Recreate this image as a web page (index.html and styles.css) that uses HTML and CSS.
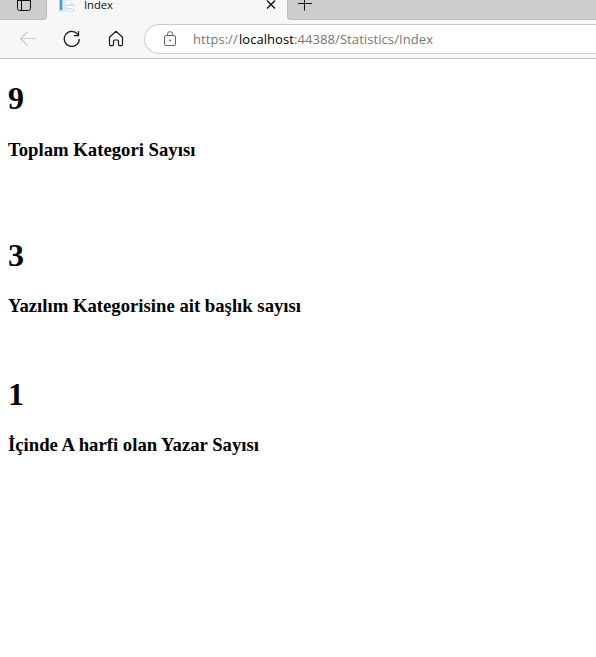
FILE: index.html
```html
<!DOCTYPE html>
<html lang="tr">
<head>
<meta charset="utf-8">
<title>Index</title>
<link rel="stylesheet" href="styles.css">
</head>
<body>
<header class="browser">
  <div class="tabs">
    <div class="tab-menu">
      <svg width="16" height="20" viewBox="0 0 16 20" fill="none" stroke="#111"><path d="M1.500-2V8.500Q1.500 10.500 3.500 10.500H12.500Q14.500 10.500 14.500 8.500V-2M5.500 1V10.500M1.500.500H14.500"/></svg>
    </div>
    <div class="tab">
      <svg class="favicon" width="16" height="12" viewBox="0 0 16 12"><path fill="#e4e8f0" d="M0 0h11l4 4v8H0z"/><path fill="#4b9bd1" d="M1 0h2v10H1z"/><path fill="#a9d4ed" d="M0 0h1v11H0zM3 0h1v10H3z"/><path fill="#fff" d="M7 1h4v3H7zM8 6h6v4H8z"/><path stroke="#d3d7e4" fill="none" d="M6.500 5.500h8v6M8 8.500h5"/></svg>
      <span class="tab-title">Index</span>
      <svg class="close" width="10" height="10" viewBox="0 0 10 10" stroke="#111" stroke-width="1.400"><path d="M1 .500l8 8M9 .500L1 8.500"/></svg>
    </div>
    <div class="tab-rest">
      <svg width="14" height="12" viewBox="0 0 14 12" stroke="#111"><path d="M0 3.500h14M6.500 0v10.500"/></svg>
    </div>
  </div>
  <div class="toolbar">
    <svg class="back" width="16" height="16" viewBox="0 0 16 16" fill="none" stroke="#cacaca" stroke-width="1.100"><path d="M16 8.500H.800M7.500 1.500l-7 7 7 7"/></svg>
    <svg class="reload" width="18" height="18" viewBox="0 0 18 18" fill="none" stroke="#1b1b1b" stroke-width="1.250"><path d="M16.300 9A7.500 7.500 0 1 1 14.600 4.200L15.500 5.500M15.500 1v4.500H11"/></svg>
    <svg class="home" width="16" height="17" viewBox="0 0 16 17" fill="none" stroke="#1b1b1b" stroke-width="1.200" stroke-linejoin="round"><path d="M1.500 7.200L8 1.300l6.500 5.900v7.400q0 1-1 1h-2q-1 0-1-1V11q0-1-1-1h-3q-1 0-1 1v3.600q0 1-1 1h-2q-1 0-1-1z"/></svg>
    <div class="address">
      <svg class="lock" width="13" height="16" viewBox="0 0 13 16" fill="none" stroke="#666"><rect x=".5" y="4.500" width="11" height="10" rx="1.500"/><path d="M3.500 4.500V3.200a2.600 2.600 0 0 1 5.200 0v1.300"/><circle cx="6" cy="9.500" r=".9" fill="#666" stroke="none"/></svg>
      <span class="url"><span class="scheme">https://</span><span class="host">localhost</span><span class="path">:44388/Statistics/Index</span></span>
    </div>
  </div>
</header>
<main>
  <section class="stat stat-first">
    <h1>9</h1>
    <h3>Toplam Kategori Sayısı</h3>
  </section>
  <section class="stat stat-spaced">
    <h1>3</h1>
    <h3>Yazılım Kategorisine ait başlık sayısı</h3>
  </section>
  <section class="stat">
    <h1>1</h1>
    <h3>İçinde A harfi olan Yazar Sayısı</h3>
  </section>
</main>
</body>
</html>
```
FILE: styles.css
```css
* { box-sizing: border-box; }
body {
  margin: 0;
  height: 657px;
  overflow: hidden;
  background: #fff;
  color: #000;
  font-family: "Liberation Serif", serif;
}
svg { display: block; flex: none; }
.browser {
  height: 59px;
  background: #f7f7f7;
  border-bottom: 1px solid #c2c2c2;
  font-family: "Open Sans", "Noto Sans", sans-serif;
}
.tabs { display: flex; height: 20px; }
.tab-menu {
  width: 47px;
  padding-left: 16px;
  background: #cdcdcd;
  border: solid #bdbdbd;
  border-width: 0 1px 1px 0;
  border-radius: 0 0 4px 0;
}
.tab { display: flex; width: 240px; padding-left: 12px; }
.tab-title {
  width: 182px;
  margin-left: 9px;
  font-size: 11.2px;
  line-height: 9px;
  color: #111;
}
.tab-rest {
  flex: 1;
  padding-left: 10px;
  background: #cdcdcd;
  border: solid #bdbdbd;
  border-width: 0 0 1px 1px;
  border-radius: 0 0 0 4px;
}
.toolbar { display: flex; height: 38px; padding-left: 20px; }
.back { margin-top: 10px; }
.reload { margin: 10px 0 0 27px; }
.home { margin: 10px 0 0 27px; }
.address {
  display: flex;
  flex: 1;
  height: 30px;
  margin: 4px 0 0 20px;
  padding-left: 19px;
  background: #fff;
  border: 1px solid #cbcbcb;
  border-right: 0;
  border-radius: 15px 0 0 15px;
}
.lock { margin-top: 6px; }
.url {
  display: flex;
  margin-left: 16px;
  font-size: 13px;
  line-height: 29px;
  color: #767676;
}
.scheme { width: 46px; letter-spacing: .05px; }
.host { width: 55px; color: #000; letter-spacing: .05px; }
.path { letter-spacing: .08px; }
main { padding: 21.44px 8px 0; }
.stat { height: 139px; }
.stat-spaced { margin-top: 18px; }
h1 { margin: 0; font-size: 32px; line-height: 37px; }
h3 { margin: 21px 0 0; font-size: 18.72px; line-height: 21px; }
.stat-first h3 { margin-top: 22px; }
```
